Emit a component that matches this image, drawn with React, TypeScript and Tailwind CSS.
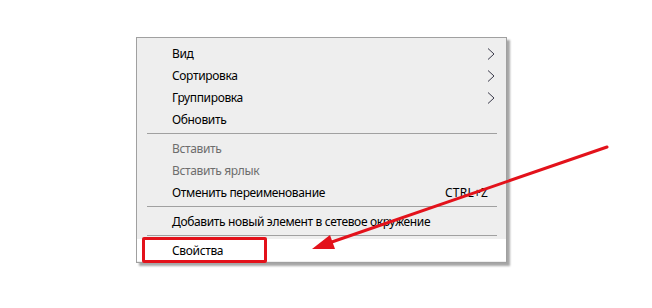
import React from "react";

type Item =
  | { kind: "item"; label: string; disabled?: boolean; sub?: boolean; shortcut?: string; hover?: boolean }
  | { kind: "sep" };

const items: Item[] = [
  { kind: "item", label: "Вид", sub: true },
  { kind: "item", label: "Сортировка", sub: true },
  { kind: "item", label: "Группировка", sub: true },
  { kind: "item", label: "Обновить" },
  { kind: "sep" },
  { kind: "item", label: "Вставить", disabled: true },
  { kind: "item", label: "Вставить ярлык", disabled: true },
  { kind: "item", label: "Отменить переименование", shortcut: "CTRL+Z" },
  { kind: "sep" },
  { kind: "item", label: "Добавить новый элемент в сетевое окружение" },
  { kind: "sep" },
  { kind: "item", label: "Свойства", hover: true },
];

function Chevron() {
  return (
    <svg width="8" height="12" viewBox="0 0 8 12" className="block">
      <path d="M1 0.5 L7 6 L1 11.5" fill="none" stroke="#3a3a4a" strokeWidth="1" />
    </svg>
  );
}

export default function App() {
  return (
    <div className="relative w-[652px] h-[308px] bg-white overflow-hidden" style={{ fontFamily: '"Noto Sans", "Segoe UI", sans-serif' }}>
      <div className="pt-[37px] pl-[136px]">
        <div className="w-[371px] border border-[#a0a0a0] bg-[#eeeeee] pt-[4px] pb-[1px] shadow-[3px_3px_2px_rgba(0,0,0,0.35)]">
          {items.map((it, i) =>
            it.kind === "sep" ? (
              <div key={i} className="h-[7px] flex items-center pl-[10px] pr-[9px]">
                <div className="h-px w-full bg-[#a0a0a0]" />
              </div>
            ) : (
              <div
                key={i}
                className={
                  "h-[22px] flex items-center pl-[35px] pr-[11px] pt-[2px] text-[12px] leading-none " +
                  (it.hover ? "bg-white " : "") +
                  (it.disabled ? "text-[#6d6d6d]" : "text-black")
                }
              >
                <span className="flex-1 whitespace-nowrap tracking-[-0.35px]">{it.label}</span>
                {it.shortcut && <span className="mr-[7px] whitespace-nowrap tracking-[0.2px]">{it.shortcut}</span>}
                {it.sub && <Chevron />}
              </div>
            )
          )}
        </div>
      </div>

      <div className="absolute left-[142px] top-[237px] w-[125px] h-[26px] border-[3px] border-[#e3121b] rounded-[2px]" />

      <svg className="absolute left-0 top-0" width="652" height="308" viewBox="0 0 652 308">
        <line x1="607" y1="147" x2="326" y2="244" stroke="#e3121b" strokeWidth="3" strokeLinecap="round" />
        <polygon points="312,249 330,235 335,249" fill="#e3121b" />
      </svg>
    </div>
  );
}
